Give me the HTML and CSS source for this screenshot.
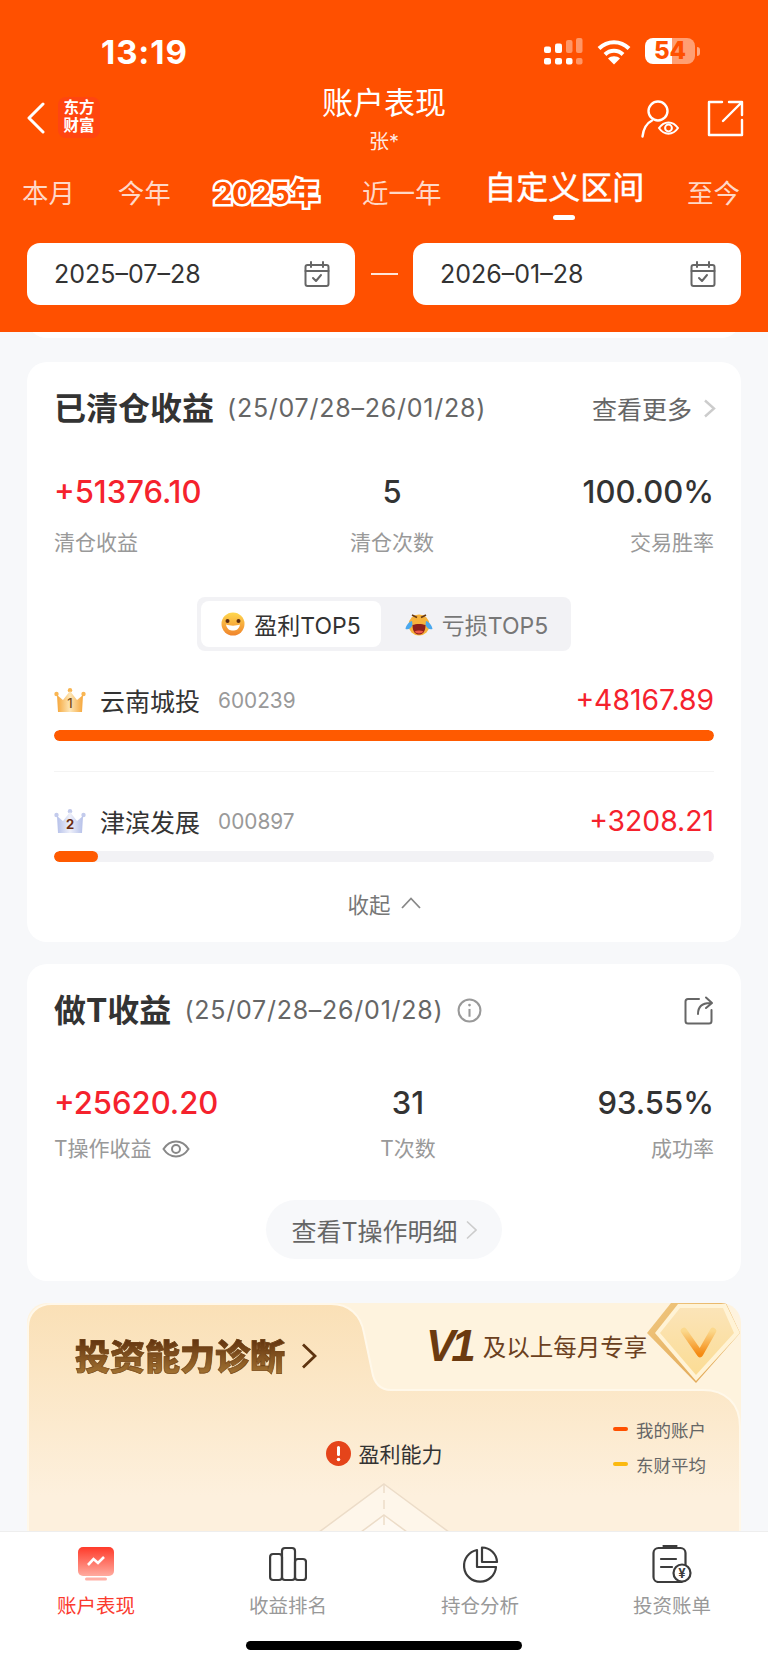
FILE: index.html
```html
<!DOCTYPE html>
<html lang="zh-CN">
<head>
    <meta charset="UTF-8">
    <meta name="viewport" content="width=device-width, initial-scale=1.0">
    <title>账户表现</title>
    <link rel="stylesheet" href="styles.css">
</head>
<body>

<div class="page">
    <header class="header">
        <div class="status-bar">
            <span class="time">13:19</span>
            <div class="status-icons">
                <svg class="signal" width="40" height="28" viewBox="0 0 40 28" fill="#fff">
                    <rect x="0" y="8.5" width="7" height="6.5" rx="2"/>
                    <rect x="11" y="5.5" width="7" height="9.5" rx="2"/>
                    <rect x="22" y="2" width="6.5" height="13" rx="2" opacity=".4"/>
                    <rect x="32" y="0" width="6.5" height="15" rx="2" opacity=".4"/>
                    <rect x="0" y="20" width="7" height="6.5" rx="2"/>
                    <rect x="11" y="20" width="7" height="6.5" rx="2"/>
                    <rect x="22" y="20" width="6.5" height="6.5" rx="2"/>
                    <rect x="32" y="20" width="6.5" height="6.5" rx="2" opacity=".4"/>
                </svg>
                <svg class="wifi" width="34" height="26" viewBox="0 0 34 26" fill="none" stroke="#fff" stroke-width="4">
                    <path d="M2 9.5C10.5 1 23.5 1 32 9.5"/>
                    <path d="M8 15.5C13 10.5 21 10.5 26 15.5"/>
                    <path d="M17 25.5L11 19.5C14 16.5 20 16.5 23 19.5Z" fill="#fff" stroke="none"/>
                </svg>
                <div class="battery"><span class="battery-num">54</span></div>
                <span class="battery-tip"></span>
            </div>
        </div>

        <div class="nav-bar">
            <div class="nav-left">
                <svg width="18" height="32" viewBox="0 0 18 32" fill="none" stroke="#fff" stroke-width="3" stroke-linecap="round" stroke-linejoin="round">
                    <path d="M16 2L2 16L16 30"/>
                </svg>
                <div class="logo">东方<br>财富</div>
            </div>
            <div class="nav-title">
                <div class="title">账户表现</div>
                <div class="subtitle">张*</div>
            </div>
            <div class="nav-right">
                <svg width="38" height="38" viewBox="0 0 38 38" fill="none" stroke="#fff" stroke-width="2.4" stroke-linecap="round">
                    <circle cx="17" cy="11" r="9.5"/>
                    <path d="M1.5 36.5C2.5 28 6 23 11 20.5"/>
                    <path d="M18 28C23 20.5 32 20.5 37 28C32 35.5 23 35.5 18 28Z" stroke-width="2"/>
                    <circle cx="27.5" cy="28" r="3.4" stroke-width="2"/>
                </svg>
                <svg width="37" height="37" viewBox="0 0 37 37" fill="none" stroke="#fff" stroke-width="2.4" stroke-linecap="round" stroke-linejoin="round">
                    <path d="M15 2H2V35H35V20"/>
                    <path d="M16 21L35 2M22 2H35V15" />
                </svg>
            </div>
        </div>

        <div class="tabs">
            <span class="tab">本月</span>
            <span class="tab">今年</span>
            <span class="tab tab-year">2025年</span>
            <span class="tab">近一年</span>
            <span class="tab tab-active">自定义区间</span>
            <span class="tab">至今</span>
        </div>

        <div class="date-row">
            <div class="date-box">
                <span>2025–07–28</span>
                <svg width="26" height="26" viewBox="0 0 26 26" fill="none" stroke="#666" stroke-width="2" stroke-linecap="round" stroke-linejoin="round">
                    <rect x="1.5" y="4" width="23" height="21" rx="2"/>
                    <path d="M1.5 10H24.5M7 1V6M19 1V6M9 17L12 20L17 14"/>
                </svg>
            </div>
            <span class="date-sep"></span>
            <div class="date-box">
                <span>2026–01–28</span>
                <svg width="26" height="26" viewBox="0 0 26 26" fill="none" stroke="#666" stroke-width="2" stroke-linecap="round" stroke-linejoin="round">
                    <rect x="1.5" y="4" width="23" height="21" rx="2"/>
                    <path d="M1.5 10H24.5M7 1V6M19 1V6M9 17L12 20L17 14"/>
                </svg>
            </div>
        </div>
    </header>

    <main class="content">
        <div class="prev-card"></div>

        <section class="card card-closed">
            <div class="card-head">
                <h2>已清仓收益</h2>
                <span class="range">(25/07/28–26/01/28)</span>
                <span class="more">查看更多</span>
                <svg class="chev-more" width="13" height="19" viewBox="0 0 13 19" fill="none" stroke="#ccc" stroke-width="2.4"><path d="M2 1.5L11 9.5L2 17.5"/></svg>
            </div>
            <div class="stats">
                <div class="stat">
                    <div class="stat-value red">+51376.10</div>
                    <div class="stat-label">清仓收益</div>
                </div>
                <div class="stat stat-center">
                    <div class="stat-value">5</div>
                    <div class="stat-label">清仓次数</div>
                </div>
                <div class="stat stat-right">
                    <div class="stat-value">100.00%</div>
                    <div class="stat-label">交易胜率</div>
                </div>
            </div>

            <div class="seg">
                <div class="seg-item seg-on">
                    <svg width="24" height="24" viewBox="0 0 24 24">
                        <defs><linearGradient id="smile" x1="0" y1="0" x2="0" y2="1"><stop offset="0" stop-color="#ffd84f"/><stop offset="1" stop-color="#f0842c"/></linearGradient></defs>
                        <circle cx="12" cy="12" r="11.5" fill="url(#smile)"/>
                        <circle cx="6.5" cy="9" r="2" fill="#5b2c10"/>
                        <circle cx="17.5" cy="9" r="2" fill="#5b2c10"/>
                        <path d="M5 12.5C9 14 15 14 19 12.5C18 17.5 15 18.5 12 18.5C9 18.5 6 17.5 5 12.5Z" fill="#fff"/>
                    </svg>
                    <span>盈利TOP5</span>
                </div>
                <div class="seg-item seg-off">
                    <svg width="28" height="24" viewBox="0 0 28 24">
                        <circle cx="14" cy="13" r="10.5" fill="#f6b23c"/>
                        <path d="M7 3L12 5.5M21 3L16 5.5" stroke="#6b3a10" stroke-width="1.8" fill="none"/>
                        <path d="M7 9C5 9 1 13 0.5 17C4 18 6 16 7.5 13ZM21 9C23 9 27 13 27.5 17C24 18 22 16 20.5 13Z" fill="#4aa8ee"/>
                        <path d="M7.5 13C11 11.5 17 11.5 20.5 13C20.5 20 17.5 22.5 14 22.5C10.5 22.5 7.5 20 7.5 13Z" fill="#8d1f1a"/>
                        <path d="M9.5 19.5C12 18 16 18 18.5 19.5C17 22 11 22 9.5 19.5Z" fill="#ef5a4a"/>
                    </svg>
                    <span>亏损TOP5</span>
                </div>
            </div>

            <div class="rank-row">
                <svg class="crown" width="32" height="24" viewBox="0 0 32 24">
                    <defs><linearGradient id="gold" x1="0" y1="0" x2="1" y2="0"><stop offset="0" stop-color="#f6a63a"/><stop offset=".5" stop-color="#fde6b6"/><stop offset="1" stop-color="#f6a63a"/></linearGradient></defs>
                    <circle cx="2.5" cy="6" r="2.2" fill="#f9b653"/><circle cx="16" cy="2.2" r="2.2" fill="#f9b653"/><circle cx="29.5" cy="6" r="2.2" fill="#f9b653"/>
                    <path d="M3 7L9 12L16 3L23 12L29 7L28 24H4Z" fill="url(#gold)"/>
                    <text x="16" y="20" class="crown-num crown-num-gold">1</text>
                </svg>
                <span class="rank-name">云南城投</span>
                <span class="rank-code">600239</span>
                <span class="rank-value red">+48167.89</span>
            </div>
            <div class="bar"><div class="bar-fill" style="width: 100%"></div></div>
            <div class="divider"></div>
            <div class="rank-row">
                <svg class="crown" width="32" height="24" viewBox="0 0 32 24">
                    <defs><linearGradient id="silver" x1="0" y1="0" x2="1" y2="0"><stop offset="0" stop-color="#b5c0e9"/><stop offset=".5" stop-color="#eef0fa"/><stop offset="1" stop-color="#b5c0e9"/></linearGradient></defs>
                    <circle cx="2.5" cy="6" r="2.2" fill="#c3cbec"/><circle cx="16" cy="2.2" r="2.2" fill="#c3cbec"/><circle cx="29.5" cy="6" r="2.2" fill="#c3cbec"/>
                    <path d="M3 7L9 12L16 3L23 12L29 7L28 24H4Z" fill="url(#silver)"/>
                    <text x="16" y="20" class="crown-num">2</text>
                </svg>
                <span class="rank-name">津滨发展</span>
                <span class="rank-code">000897</span>
                <span class="rank-value red">+3208.21</span>
            </div>
            <div class="bar"><div class="bar-fill" style="width: 6.7%"></div></div>
            <div class="toggle">
                <span>收起</span>
                <svg width="20" height="12" viewBox="0 0 20 12" fill="none" stroke="#888" stroke-width="1.8"><path d="M1 11L10 1.5L19 11"/></svg>
            </div>
        </section>

        <section class="card card-t">
            <div class="card-head">
                <h2>做T收益</h2>
                <span class="range">(25/07/28–26/01/28)</span>
                <svg class="info" width="25" height="25" viewBox="0 0 24 24" fill="none" stroke="#999" stroke-width="2">
                    <circle cx="12" cy="12" r="10.5"/>
                    <path d="M12 10.5V18"/>
                    <circle cx="12" cy="6.8" r="1.3" fill="#999" stroke="none"/>
                </svg>
                <svg class="share" width="30" height="29" viewBox="0 0 30 29" fill="none" stroke="#666" stroke-width="2" stroke-linecap="round" stroke-linejoin="round">
                    <path d="M15 3H4C2.5 3 1.5 4 1.5 5.5V25C1.5 26.5 2.5 27.5 4 27.5H25C26.5 27.5 27.5 26.5 27.5 25V14"/>
                    <path d="M14 18C14 11 18 7 26 7M22 1.5L28 7L22 12"/>
                </svg>
            </div>
            <div class="stats">
                <div class="stat">
                    <div class="stat-value red">+25620.20</div>
                    <div class="stat-label">T操作收益
                        <svg class="eye" width="28" height="20" viewBox="0 0 28 20" fill="none" stroke="#888" stroke-width="2">
                            <path d="M1.5 10C8 0 20 0 26.5 10C20 20 8 20 1.5 10Z"/>
                            <circle cx="14" cy="10" r="4"/>
                        </svg>
                    </div>
                </div>
                <div class="stat stat-center">
                    <div class="stat-value">31</div>
                    <div class="stat-label">T次数</div>
                </div>
                <div class="stat stat-right">
                    <div class="stat-value">93.55%</div>
                    <div class="stat-label">成功率</div>
                </div>
            </div>
            <div class="detail-btn">
                <span>查看T操作明细</span>
                <svg width="11" height="20" viewBox="0 0 11 20" fill="none" stroke="#ccc" stroke-width="1.6"><path d="M1 1.5L10 10L1 18.5"/></svg>
            </div>
        </section>

        <section class="diag">
            <svg class="diag-bg" width="714" height="240" viewBox="0 0 714 240">
                <defs><linearGradient id="diagFill" x1="0" y1="0" x2="0" y2="1"><stop offset="0" stop-color="#fae0b6"/><stop offset=".8" stop-color="#fdf0dd"/></linearGradient></defs>
                <path d="M1 240V24C1 10 11 1 25 1H304C322 1 334 12 337 30L345 68C347 80 353 87 364 87H676C698 87 713 100 713 124V240Z" fill="url(#diagFill)" stroke="#fff8ea" stroke-width="2"/>
            </svg>
            <div class="diag-top">
                <div class="diag-title">投资能力诊断</div>
                <svg class="diag-chev" width="16" height="26" viewBox="0 0 16 26" fill="none" stroke="#5e3410" stroke-width="2.8"><path d="M2 1.5L14 13L2 24.5"/></svg>
                <div class="diag-promo">
                    <span class="v1">V1</span>
                    <span class="promo-text">及以上每月专享</span>
                </div>
                <svg class="badge" width="94" height="80" viewBox="0 0 94 80">
                    <defs>
                        <linearGradient id="badgeOuter" x1="0" y1="0" x2="1" y2="1"><stop offset="0" stop-color="#f0c77f"/><stop offset="1" stop-color="#dfa24f"/></linearGradient>
                        <linearGradient id="badgeInner" x1="0" y1="0" x2="0" y2="1"><stop offset="0" stop-color="#fbe4b8"/><stop offset="1" stop-color="#fbdc94"/></linearGradient>
                        <linearGradient id="badgeV" x1="0" y1="0" x2="0" y2="1"><stop offset="0" stop-color="#fbd88c"/><stop offset="1" stop-color="#f58a12"/></linearGradient>
                    </defs>
                    <path d="M24 0H79L93 30L49 80L0 30Z" fill="url(#badgeOuter)"/>
                    <path d="M31 1H79L93 30L49 78L8 30Z" fill="#fff3d6"/>
                    <path d="M33 5H76L87 30L49 72L13 30Z" fill="url(#badgeInner)"/>
                    <path d="M37 28L53 51L66 28" fill="none" stroke="url(#badgeV)" stroke-width="6.5" stroke-linecap="round" stroke-linejoin="round"/>
                </svg>
            </div>
            <div class="diag-body">
                <div></div>
                <div class="ability">
                    <div class="ability-title">
                        <svg width="25" height="25" viewBox="0 0 25 25">
                            <circle cx="12.5" cy="12.5" r="12.5" fill="#e5441a"/>
                            <rect x="11" y="5" width="3" height="10" rx="1.5" fill="#fff"/>
                            <circle cx="12.5" cy="18.5" r="1.8" fill="#fff"/>
                        </svg>
                        <span>盈利能力</span>
                    </div>
                    <svg class="radar" width="200" height="90" viewBox="0 0 200 90" fill="rgba(255,255,255,.4)" stroke="#ecdcc8" stroke-width="1.5">
                        <path d="M100 1L200 75V90H0V75Z"/>
                        <path d="M100 32L146 66V90H54V66Z"/>
                        <path d="M100 1V48" stroke-dasharray="9 7" fill="none"/>
                    </svg>
                </div>
                <div class="legend">
                    <div class="legend-row"><i class="mark mark-me"></i>我的账户</div>
                    <div class="legend-row"><i class="mark mark-avg"></i>东财平均</div>
                </div>
            </div>
        </section>
    </main>

    <nav class="tabbar">
        <div class="tabbar-items">
            <div class="tabbar-item tabbar-on">
                <svg width="38" height="36" viewBox="0 0 38 36">
                    <defs><linearGradient id="screen" x1="0" y1="0" x2="0" y2="1"><stop offset="0" stop-color="#ff3a2a"/><stop offset="1" stop-color="#ffab9f"/></linearGradient></defs>
                    <rect x="1" y="1" width="36" height="29" rx="5" fill="url(#screen)"/>
                    <rect x="8" y="31.5" width="22" height="3" rx="1.5" fill="#ffb0a6"/>
                    <path d="M11 19L16.5 13L21 17L27 11" fill="none" stroke="#fff" stroke-width="2.6"/>
                </svg>
                <span>账户表现</span>
            </div>
            <div class="tabbar-item">
                <svg width="38" height="36" viewBox="0 0 38 36" fill="none" stroke="#3c3c3c" stroke-width="2.2" stroke-linejoin="round">
                    <rect x="1.1" y="8" width="11.9" height="26" rx="3"/>
                    <rect x="13" y="2" width="13" height="32" rx="3"/>
                    <rect x="26" y="13" width="11" height="21" rx="3"/>
                </svg>
                <span>收益排名</span>
            </div>
            <div class="tabbar-item">
                <svg width="38" height="36" viewBox="0 0 38 36" fill="none" stroke="#3c3c3c" stroke-width="2.2" stroke-linejoin="round">
                    <path d="M16 4A16 16 0 1 0 35 21H16Z"/>
                    <path d="M21 1.5A15 15 0 0 1 36 16H21Z"/>
                </svg>
                <span>持仓分析</span>
            </div>
            <div class="tabbar-item">
                <svg width="40" height="38" viewBox="0 0 40 38" fill="none" stroke="#3c3c3c" stroke-width="2.2" stroke-linecap="round">
                    <rect x="1.5" y="3" width="32" height="34" rx="5"/>
                    <path d="M12 1H24" stroke-width="3"/>
                    <path d="M9 14H24M9 22H20"/>
                    <circle cx="30" cy="28" r="8.5" fill="#fff"/>
                    <text x="30" y="32.5" class="coin">¥</text>
                </svg>
                <span>投资账单</span>
            </div>
        </div>
        <div class="home-bar"></div>
    </nav>
</div>

</body>
</html>
```

FILE: styles.css
```css
* {
    box-sizing: border-box;
}
body {
    margin: 0;
    font-family: Inter, "Noto Sans CJK SC", sans-serif;
    background-color: #f7f8fa;
    color: #333;
}
svg {
    display: block;
    flex-shrink: 0;
}
.page {
    width: 768px;
    height: 1665px;
    display: flex;
    flex-direction: column;
    overflow: hidden;
}

/* header */
.header {
    flex-shrink: 0;
    height: 332px;
    background-color: #ff5000;
    color: #fff;
}
.status-bar {
    height: 84px;
    padding: 30px 68px 0 101px;
    display: flex;
    justify-content: space-between;
}
.time {
    font-size: 33px;
    font-weight: 700;
    line-height: 44px;
    letter-spacing: .9px;
}
.status-icons {
    display: flex;
    align-items: flex-start;
}
.signal {
    margin-top: 8px;
}
.wifi {
    margin: 9px 0 0 13px;
}
.battery {
    width: 50px;
    height: 26px;
    margin: 8px 0 0 14px;
    border-radius: 8px;
    background: linear-gradient(90deg, #fff 54%, rgba(255, 255, 255, .45) 54%);
    text-align: center;
}
.battery-num {
    font-size: 24px;
    font-weight: 800;
    line-height: 26px;
    color: #ff5000;
    display: block;
}
.battery-tip {
    width: 3px;
    height: 9px;
    margin: 17px 0 0 2px;
    border-radius: 0 3px 3px 0;
    background-color: rgba(255, 255, 255, .5);
}
.nav-bar {
    height: 70px;
    padding: 0 24px;
    display: grid;
    grid-template-columns: 1fr auto 1fr;
}
.nav-left {
    display: flex;
    align-items: center;
    gap: 13px;
    height: 41px;
    margin: 13px 0 0 3px;
}
.logo {
    width: 42px;
    height: 41px;
    border-radius: 8px;
    background-color: #ff4510;
    font-size: 15.5px;
    font-weight: 700;
    line-height: 18px;
    text-align: center;
    padding-top: 2px;
}
.nav-title {
    text-align: center;
}
.title {
    font-size: 31px;
    line-height: 38px;
}
.subtitle {
    font-size: 20px;
    line-height: 28px;
    margin-top: 6px;
    color: rgba(255, 255, 255, .9);
}
.nav-right {
    display: flex;
    justify-content: flex-end;
    gap: 28px;
    margin-top: 16px;
}
.tabs {
    height: 89px;
    padding: 16px 28px 0 22px;
    display: flex;
    justify-content: space-between;
    align-items: flex-start;
    white-space: nowrap;
}
.tab {
    font-size: 26.5px;
    line-height: 36px;
    margin-top: 5px;
    color: rgba(255, 255, 255, .78);
}
.tab-year {
    font-size: 30px;
    font-weight: 700;
    color: #ff5000;
    -webkit-text-stroke: 5px #fff;
    paint-order: stroke fill;
    letter-spacing: -.3px;
}
.tab-active {
    margin-top: 0;
    font-size: 32px;
    color: #fff;
    -webkit-text-stroke: .5px #fff;
    display: flex;
    flex-direction: column;
    align-items: center;
}
.tab-active::after {
    content: "";
    width: 22px;
    height: 5px;
    margin-top: 9px;
    border-radius: 3px;
    background-color: #fff;
}
.date-row {
    padding: 0 27px;
    display: flex;
    align-items: center;
}
.date-box {
    width: 328px;
    height: 62px;
    padding: 0 25px 0 27px;
    border-radius: 13px;
    background-color: #fff;
    color: #333;
    font-size: 25px;
    display: flex;
    justify-content: space-between;
    align-items: center;
}
.date-sep {
    flex: 1;
    height: 2px;
    margin: 0 15px 0 16px;
    background-color: rgba(255, 255, 255, .85);
}

/* scrolling part */
.content {
    flex: 1;
    min-height: 0;
    padding: 0 27px;
    overflow: hidden;
    background-color: #f7f8fa;
}
.prev-card {
    height: 26px;
    margin-top: -20px;
    border-radius: 0 0 20px 20px;
    background-color: #fff;
}
.card {
    padding: 26px 27px 0;
    border-radius: 20px;
    background-color: #fff;
}
.card-closed {
    height: 580px;
    margin-top: 24px;
}
.card-t {
    height: 317px;
    margin-top: 22px;
}
.card-head {
    height: 40px;
    display: flex;
    align-items: center;
}
h2 {
    margin: 0 0 4px;
    font-size: 32px;
    font-weight: 700;
    color: #333;
}
.range {
    margin-left: 13px;
    font-size: 25px;
    letter-spacing: .75px;
    color: #666;
}
.more {
    margin-left: auto;
    font-size: 25px;
    color: #666;
}
.chev-more {
    margin: 0 -2px 0 11px;
}
.info {
    margin-left: 14px;
}
.share {
    margin-left: auto;
}
.stats {
    display: flex;
    justify-content: space-between;
    margin-top: 44px;
}
.card-t .stats {
    margin-top: 53px;
}
.stat {
    display: flex;
    flex-direction: column;
}
.stat-value {
    font-size: 31px;
    font-weight: 500;
    line-height: 40px;
    color: #333;
}
.stat-value.red {
    color: #f5222d;
}
.red {
    color: #f5222d;
}
.stat-label {
    margin-top: 16px;
    font-size: 21px;
    line-height: 30px;
    color: #999;
    display: flex;
    align-items: center;
    gap: 10px;
}
.card-t .stat-label {
    margin-top: 11px;
}
.stat-center {
    align-items: center;
}
.stat-right {
    align-items: flex-end;
}
.seg {
    width: 374px;
    height: 54px;
    margin: 39px auto 0;
    padding: 4px;
    border-radius: 8px;
    background-color: #f2f2f5;
    display: flex;
}
.seg-item {
    flex: 1;
    border-radius: 8px;
    font-size: 23px;
    color: #777;
    display: flex;
    justify-content: center;
    align-items: center;
    gap: 9px;
}
.seg-on {
    flex: 0 0 180px;
    background-color: #fff;
    color: #333;
}
.seg-off {
    padding-left: 5px;
}
.rank-row {
    height: 40px;
    margin-top: 29px;
    display: flex;
    align-items: center;
}
.crown-num {
    font-size: 13px;
    font-weight: 700;
    text-anchor: middle;
    fill: #6b2d12;
}
.crown-num-gold {
    fill: #7a4a14;
    font-weight: 500;
}
.rank-name {
    margin-left: 14px;
    font-size: 25px;
    color: #333;
}
.rank-code {
    margin-left: 18px;
    font-size: 20.8px;
    color: #999;
}
.rank-value {
    margin-left: auto;
    font-size: 28.3px;
}
.bar {
    height: 11px;
    margin-top: 10px;
    border-radius: 6px;
    background-color: #f2f2f5;
    overflow: hidden;
}
.bar-fill {
    height: 100%;
    border-radius: 6px;
    background-color: #ff5a00;
}
.divider {
    height: 1px;
    margin-top: 30px;
    background-color: #f4f4f4;
}
.toggle {
    height: 34px;
    margin-top: 24px;
    font-size: 21.5px;
    color: #777;
    display: flex;
    justify-content: center;
    align-items: center;
    gap: 10px;
}
.detail-btn {
    width: 236px;
    height: 59px;
    margin: 36px auto 0;
    border-radius: 30px;
    background-color: #f7f8fa;
    font-size: 25px;
    color: #666;
    display: flex;
    justify-content: center;
    align-items: center;
    gap: 8px;
}

/* diagnosis card */
.diag {
    position: relative;
    height: 260px;
    margin-top: 22px;
    border-radius: 20px 20px 0 0;
    background-color: #fef3de;
    overflow: hidden;
}
.diag-bg {
    position: absolute;
    left: 0;
    top: 0;
}
.diag-top {
    position: relative;
    height: 87px;
    padding-left: 48px;
    display: flex;
    align-items: flex-start;
}
.diag-title {
    margin-top: 34px;
    font-size: 35px;
    font-weight: 900;
    line-height: 40px;
    white-space: nowrap;
    background: linear-gradient(180deg, #5e2f0c, #a87835);
    -webkit-background-clip: text;
    background-clip: text;
    color: transparent;
    -webkit-text-stroke: .7px rgba(110, 65, 20, .75);
}
.diag-chev {
    margin: 40px 0 0 16px;
    flex-shrink: 0;
}
.diag-promo {
    flex-shrink: 0;
    margin: 18px 0 0 109px;
    display: flex;
    align-items: center;
    white-space: nowrap;
    color: #6b4020;
}
.v1 {
    font-family: "Liberation Sans", sans-serif;
    font-size: 44px;
    font-weight: 700;
    font-style: italic;
    line-height: 50px;
    letter-spacing: -4px;
    color: #6b3a10;
}
.promo-text {
    margin-left: 11px;
    font-size: 23.5px;
}
.badge {
    margin-left: auto;
}
.diag-body {
    position: relative;
    display: grid;
    grid-template-columns: 1fr auto 1fr;
}
.ability {
    padding-top: 48px;
}
.ability-title {
    height: 30px;
    font-size: 21px;
    color: #333;
    display: flex;
    justify-content: center;
    align-items: center;
    gap: 8px;
}
.radar {
    margin-top: 15px;
}
.legend {
    justify-self: end;
    padding: 27px 35px 0 0;
    font-size: 17.5px;
    color: #666;
}
.legend-row {
    height: 24px;
    margin-bottom: 11px;
    display: flex;
    align-items: center;
    gap: 8px;
}
.mark {
    width: 15px;
    height: 4px;
    border-radius: 2px;
}
.mark-me {
    background-color: #ff5000;
}
.mark-avg {
    background-color: #fbb90f;
}

/* bottom nav */
.tabbar {
    flex-shrink: 0;
    height: 134px;
    padding-top: 13px;
    border-top: 1px solid #eeeeee;
    background-color: #fff;
}
.tabbar-items {
    display: flex;
}
.tabbar-item {
    flex: 1;
    display: flex;
    flex-direction: column;
    align-items: center;
    font-size: 19.5px;
    color: #999;
}
.tabbar-item span {
    margin-top: 9px;
    line-height: 28px;
}
.tabbar-item svg {
    height: 38px;
}
.tabbar-on {
    color: #fb3a2e;
}
.coin {
    font-size: 13px;
    font-weight: 700;
    text-anchor: middle;
    fill: #3c3c3c;
    stroke: none;
}
.home-bar {
    width: 276px;
    height: 9px;
    margin: 21px auto 0;
    border-radius: 5px;
    background-color: #000;
}
```
